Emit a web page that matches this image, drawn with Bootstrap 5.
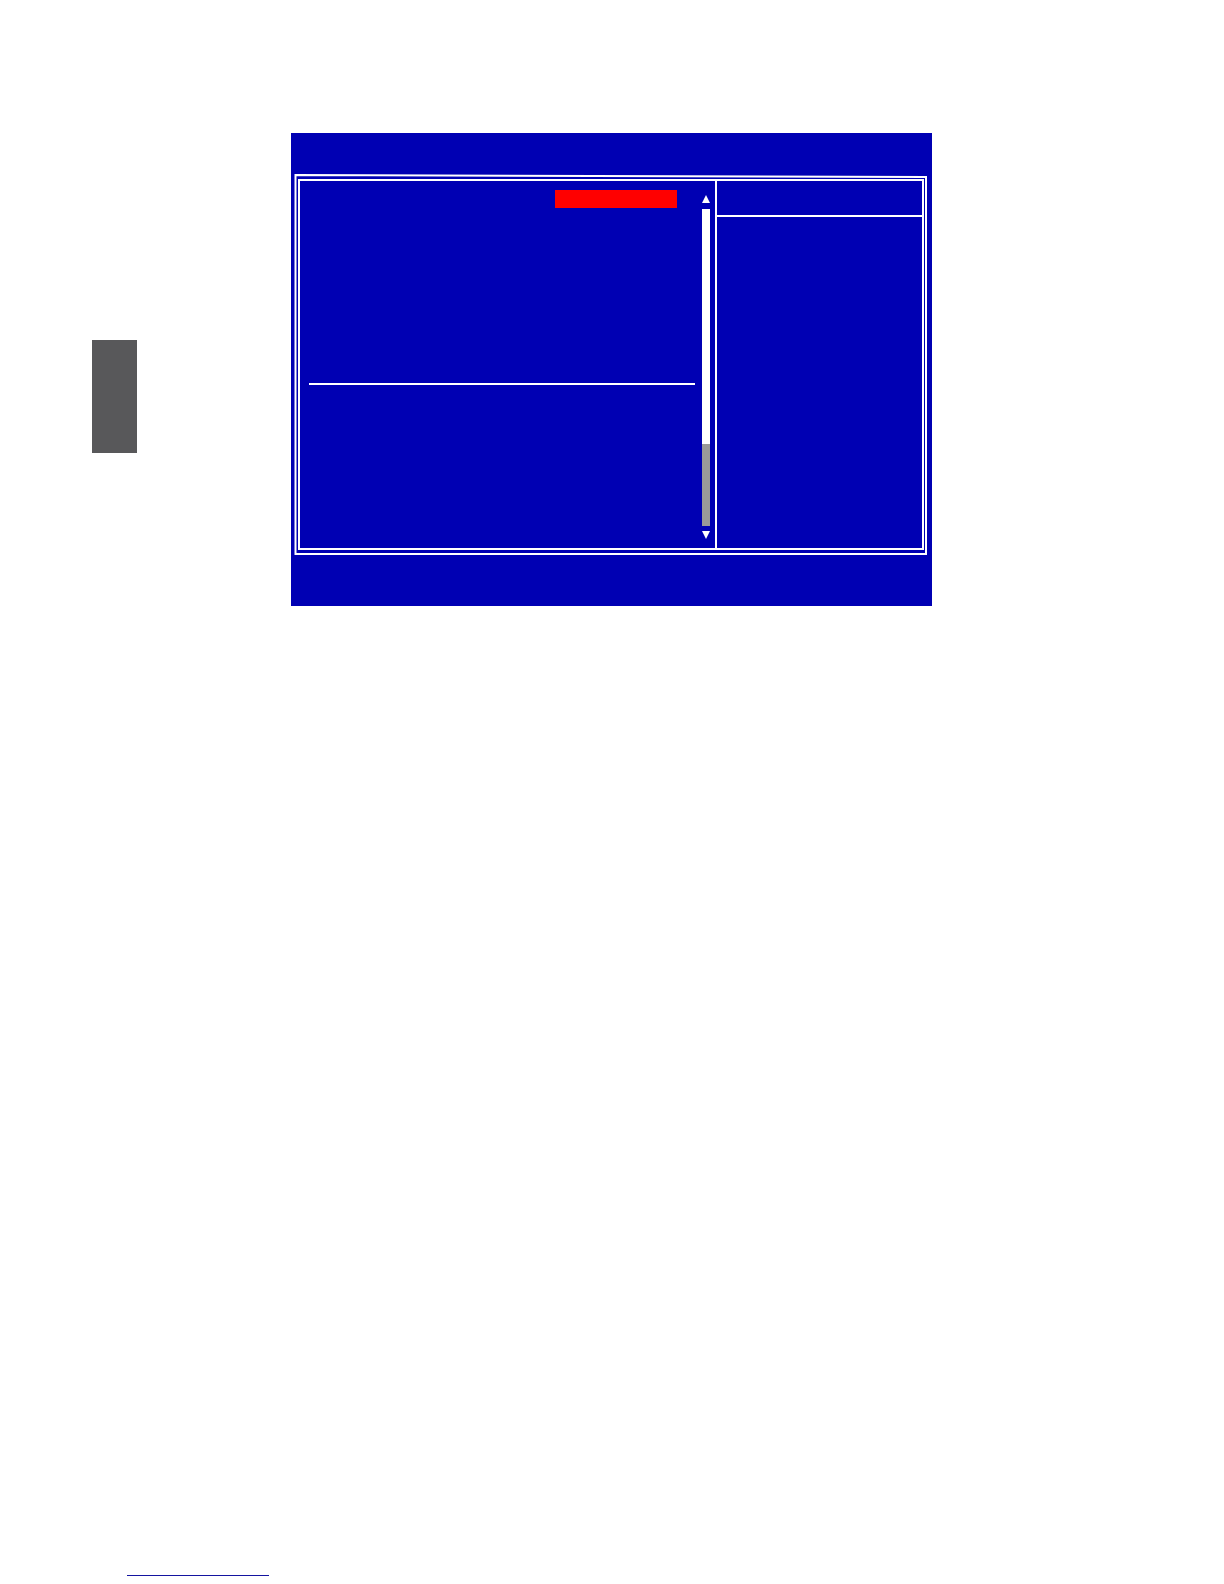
<!DOCTYPE html>
<html lang="en">
<head>
<meta charset="utf-8">
<meta name="viewport" content="width=device-width, initial-scale=1">
<title>Setup screen</title>
<link href="https://cdn.jsdelivr.net/npm/bootstrap@5.3.0/dist/css/bootstrap.min.css" rel="stylesheet">
<style>
  body { font-family: "Liberation Sans", sans-serif; background: #fff; }
  .sheet-main { padding: 133px 0 0 92px; gap: 154px; }
  .side-tab { width: 45px; height: 113px; margin-top: 207px; background: #58585a; }
  .bios { flex: 0 1 641px; padding: 41px 5px 51px 3px; background: #0000b3; }
  .frame-outer { padding: 5px 3px 5px 4px; }
  .frame-line { fill: none; stroke: #fff; stroke-width: 2; }
  .frame-inner { border: 2px solid #fff; }
  .options { padding: 9px 7px 0 9px; }
  .selected-value { width: 122px; height: 18px; margin-right: 18px; background: #f00; }
  .rule { height: 2px; margin-top: 175px; background: #fff; }
  .scroller { width: 13px; padding: 14px 5px 9px 0; }
  .track { height: 317px; margin: 6px 0 5px; background: #fff; }
  .thumb { height: 82px; background: #999; }
  .help { flex: 0 0 207px; border-left: 2px solid #fff; }
  .help-head { height: 36px; border-bottom: 2px solid #fff; }
  .foot { padding: 0 0 8px 127px; }
  .foot-link { width: 142px; height: 16px; border-bottom: 1px solid #1414a0; }
</style>
<script src="https://cdn.jsdelivr.net/npm/bootstrap@5.3.0/dist/js/bootstrap.bundle.min.js"></script>
</head>
<body class="d-flex flex-column min-vh-100">
  <main class="sheet-main d-flex align-items-start">
    <aside class="side-tab flex-shrink-0"></aside>
    <section class="bios">
      <div class="frame-outer position-relative">
        <svg class="position-absolute top-0 start-0 w-100 h-100" viewBox="0 0 633 381" preserveAspectRatio="none" aria-hidden="true">
          <path class="frame-line" d="M1.5 1 L632 3 V380 H1.5 Z"/>
        </svg>
        <div class="frame-inner position-relative d-flex">
          <div class="options flex-grow-1">
            <div class="selected-value ms-auto"></div>
            <div class="rule"></div>
          </div>
          <div class="scroller d-flex flex-column flex-shrink-0">
            <svg width="8" height="8" viewBox="0 0 8 8" aria-hidden="true"><path fill="#fff" d="M4 0 L8 8 H0 Z"/></svg>
            <div class="track d-flex flex-column justify-content-end"><div class="thumb"></div></div>
            <svg width="8" height="8" viewBox="0 0 8 8" aria-hidden="true"><path fill="#fff" d="M0 0 H8 L4 8 Z"/></svg>
          </div>
          <div class="help">
            <div class="help-head"></div>
          </div>
        </div>
      </div>
    </section>
  </main>
  <footer class="foot mt-auto"><a class="foot-link d-block" href="#" aria-label="Website"></a></footer>
</body>
</html>
